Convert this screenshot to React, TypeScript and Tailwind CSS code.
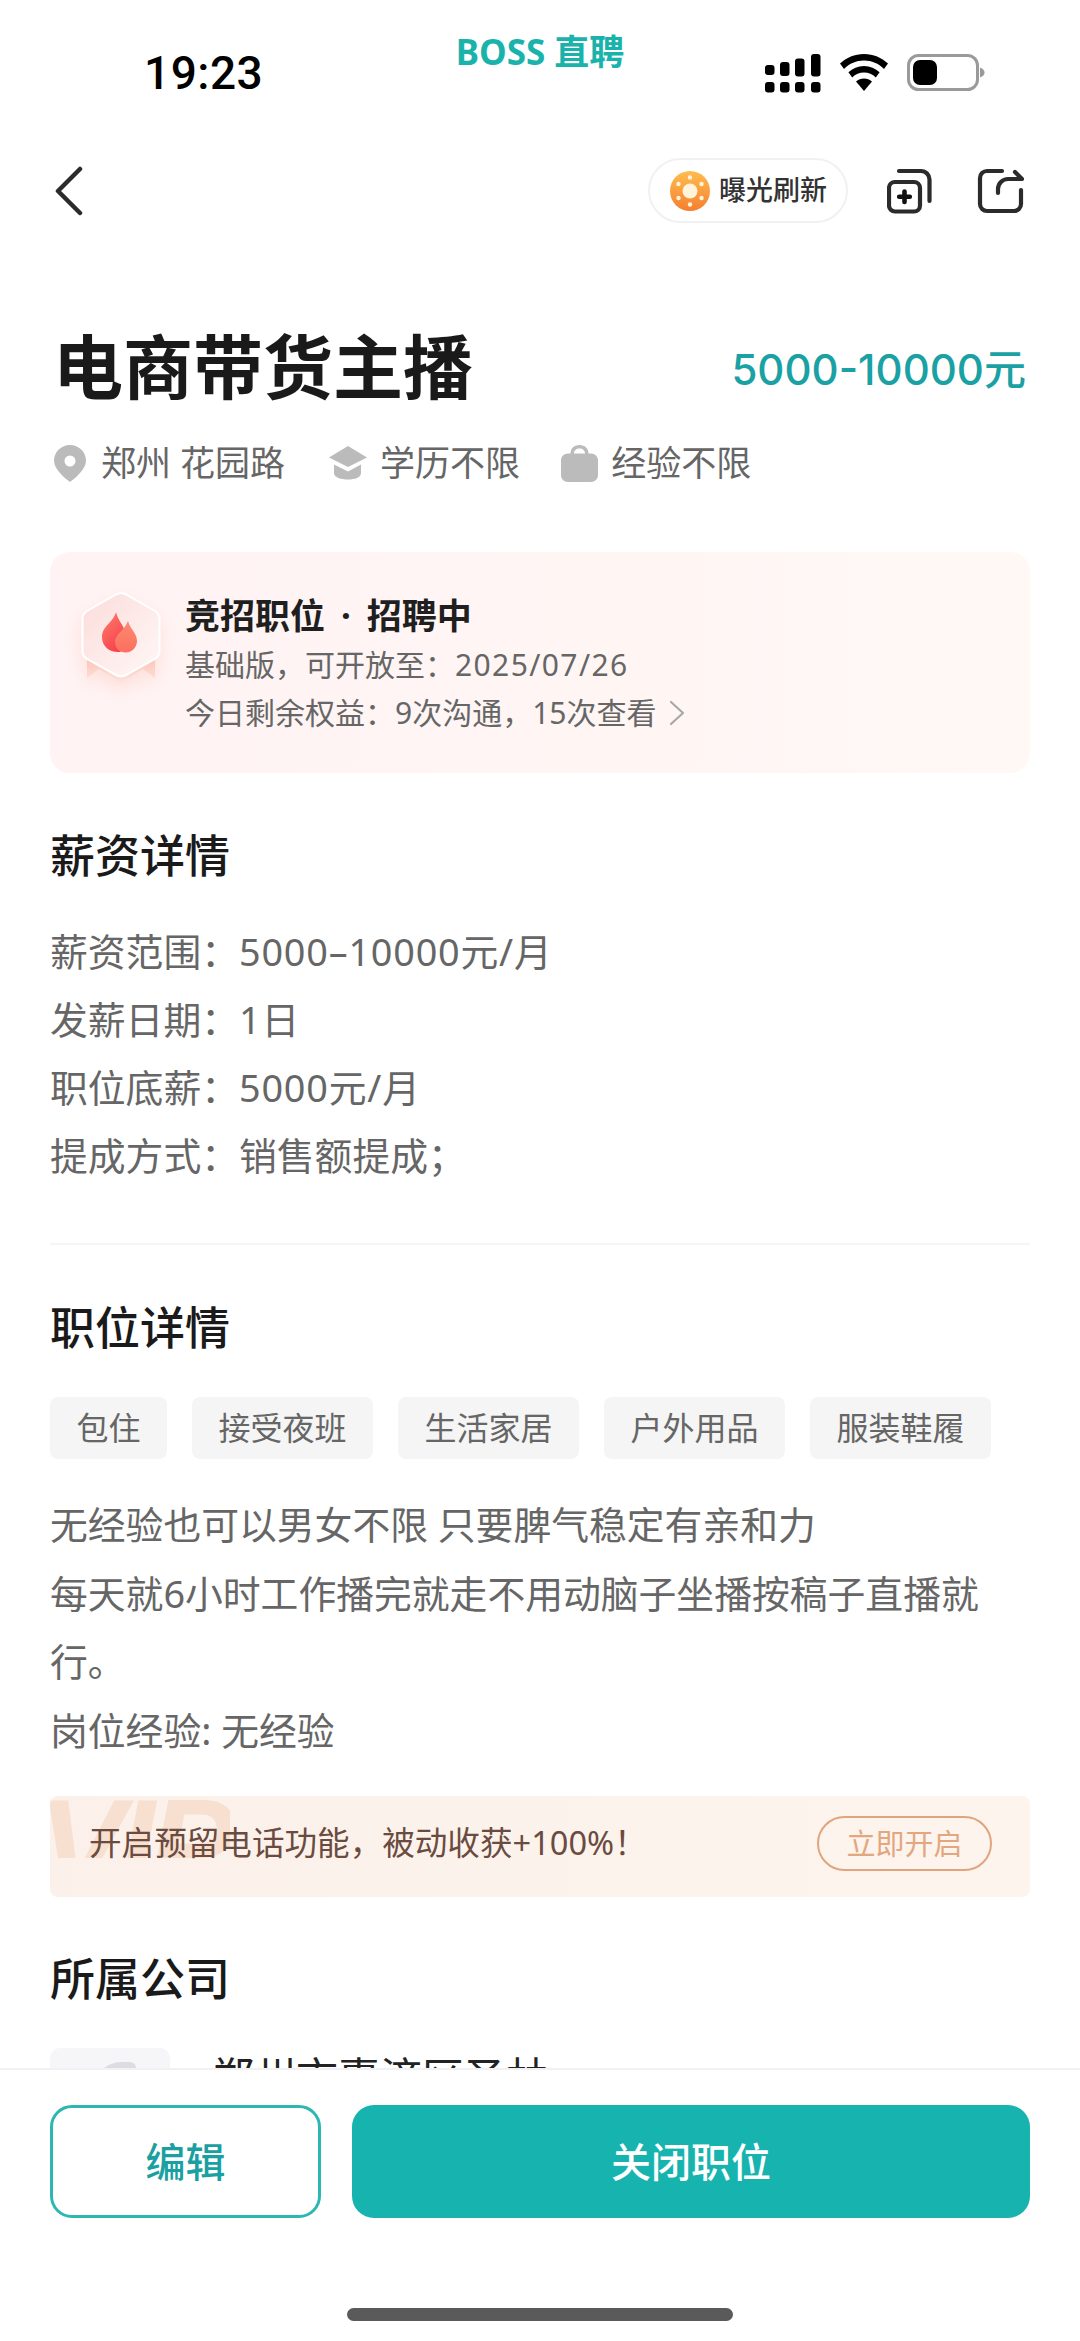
import React from 'react';

const cn = "font-['Noto_Sans','Noto_Sans_CJK_SC',sans-serif]";

const salaryRows = [
  { label: '薪资范围：', value: '5000–10000元/月', numeric: true },
  { label: '发薪日期：', value: '1日', numeric: true },
  { label: '职位底薪：', value: '5000元/月', numeric: true },
  { label: '提成方式：', value: '销售额提成；', numeric: false },
];

const tags = ['包住', '接受夜班', '生活家居', '户外用品', '服装鞋履'];

const SignalIcon = () => (
  <svg width="56" height="40" viewBox="0 0 56 40" fill="black">
    <rect x="0" y="11" width="9.5" height="10" rx="3" />
    <rect x="15" y="8" width="9.5" height="14" rx="3" />
    <rect x="30" y="4.5" width="9.5" height="18" rx="3" />
    <rect x="46" y="0" width="9.5" height="22.5" rx="3" />
    <rect x="0" y="28" width="9.5" height="10.5" rx="3" />
    <rect x="15" y="28" width="9.5" height="10.5" rx="3" />
    <rect x="30" y="28" width="9.5" height="10.5" rx="3" />
    <rect x="46" y="28" width="9.5" height="10.5" rx="3" />
  </svg>
);

const WifiIcon = () => (
  <svg width="48" height="37" viewBox="0 0 48 37" fill="black">
    <path d="M24 0C14.5 0 6.5 3.6 0 9.5L4 15C9.5 9.6 16.4 6.6 24 6.6S38.5 9.6 44 15L48 9.5C41.5 3.6 33.5 0 24 0Z" />
    <path d="M24 12C17.8 12 12.6 14.4 8.4 18.3L12.2 23.4C15.4 20.4 19.4 18.6 24 18.6S32.6 20.4 35.8 23.4L39.6 18.3C35.4 14.4 30.2 12 24 12Z" />
    <path d="M24 24.5C21 24.5 18.3 25.6 16 27.5L24 37L32 27.5C29.7 25.6 27 24.5 24 24.5Z" />
  </svg>
);

const BatteryIcon = () => (
  <svg width="78" height="37" viewBox="0 0 78 37">
    <rect x="1.5" y="1.5" width="69" height="34" rx="10" fill="none" stroke="#9a9a9a" strokeWidth="3" />
    <rect x="6" y="6" width="24" height="25" rx="7" fill="black" />
    <path d="M73 13.5C76 14.5 77.5 16.5 77.5 18.5S76 22.5 73 23.5Z" fill="#9a9a9a" />
  </svg>
);

const SunIcon = () => (
  <svg width="40" height="40" viewBox="0 0 40 40">
    <defs>
      <linearGradient id="sun" x1="0" y1="0" x2="0" y2="1">
        <stop offset="0" stopColor="#ffbd4f" />
        <stop offset="1" stopColor="#f57f31" />
      </linearGradient>
    </defs>
    <circle cx="20" cy="20" r="20" fill="url(#sun)" />
    <circle cx="20" cy="20" r="7.5" fill="#fff3d9" />
    <g fill="#fff3d9">
      <circle cx="20" cy="6.5" r="2.2" />
      <circle cx="20" cy="33.5" r="2.2" />
      <circle cx="8.5" cy="13" r="2.2" />
      <circle cx="31.5" cy="13" r="2.2" />
      <circle cx="8.5" cy="27" r="2.2" />
      <circle cx="31.5" cy="27" r="2.2" />
    </g>
  </svg>
);

const CopyPlusIcon = () => (
  <svg width="46" height="46" viewBox="0 0 46 46" fill="none" stroke="#2b2b2b" strokeWidth="4.2" strokeLinecap="round">
    <rect x="2" y="14" width="31" height="29.5" rx="6" />
    <path d="M12 3H34a8.5 8.5 0 0 1 8.5 8.5V33" />
    <path d="M17.5 23.5V34M12.2 28.7H22.8" stroke="#111" strokeWidth="4.6" />
  </svg>
);

const ShareIcon = () => (
  <svg width="47" height="46" viewBox="0 0 47 46" fill="none" stroke="#2b2b2b" strokeWidth="4.2" strokeLinecap="round" strokeLinejoin="round">
    <path d="M25 3H10a7 7 0 0 0-7 7V36a7 7 0 0 0 7 7H37a7 7 0 0 0 7-7V22" />
    <path d="M21 25V21a10 10 0 0 1 10-10H45L38 4" />
  </svg>
);

const PinIcon = () => (
  <svg width="32" height="37" viewBox="0 0 32 37">
    <path fillRule="evenodd" fill="#bbbbbb" d="M16 0C7.2 0 0 6.9 0 15.6C0 23.4 8.4 31.6 16 37C23.6 31.6 32 23.4 32 15.6C32 6.9 24.8 0 16 0ZM16 10.5a5.5 5.5 0 1 1 0 11a5.5 5.5 0 0 1 0-11Z" />
  </svg>
);

const CapIcon = () => (
  <svg width="40" height="34" viewBox="0 0 40 34" fill="#bbbbbb">
    <path d="M20 0L39 11.5L20 21L1 11.5Z" />
    <path d="M6 18.5L20 25.5L33 18.5V27C33 31.5 27 33.5 20 33.5S6 31.5 6 27Z" />
  </svg>
);

const BagIcon = () => (
  <svg width="37" height="37" viewBox="0 0 37 37" fill="#bbbbbb">
    <path fillRule="evenodd" d="M18.5 0C13 0 9.5 3.5 9.5 8.5H7C3 8.5 0 11.5 0 15.5V30C0 34 3 37 7 37H30C34 37 37 34 37 30V15.5C37 11.5 34 8.5 30 8.5H27.5C27.5 3.5 24 0 18.5 0ZM18.5 3.5C21.8 3.5 24 5.5 24 8.5H13C13 5.5 15.2 3.5 18.5 3.5Z" />
  </svg>
);

const FlameBadge = () => (
  <svg width="90" height="104" viewBox="0 0 90 104" className="shrink-0 drop-shadow-[0_8px_8px_rgba(250,150,130,0.2)]">
    <defs>
      <linearGradient id="hex" x1="0" y1="0" x2="1" y2="1">
        <stop offset="0" stopColor="#fbdcda" />
        <stop offset="1" stopColor="#fff8f7" />
      </linearGradient>
      <linearGradient id="flameA" x1="0" y1="0" x2="0.6" y2="1">
        <stop offset="0" stopColor="#fd7f6e" />
        <stop offset="1" stopColor="#f8414a" />
      </linearGradient>
      <linearGradient id="flameB" x1="0" y1="0" x2="0" y2="1">
        <stop offset="0" stopColor="#fd8a70" />
        <stop offset="1" stopColor="#fb6f5f" />
      </linearGradient>
      <linearGradient id="ribbon" x1="0" y1="0" x2="0" y2="1">
        <stop offset="0" stopColor="#fdbcae" />
        <stop offset="1" stopColor="#fde4de" />
      </linearGradient>
    </defs>
    <path d="M11 62H79V87L67 78L45 92L23 78L11 87Z" fill="url(#ribbon)" />
    <path d="M40 3.5Q45 1 50 3.5L79 20Q83.5 23 83.5 28V60Q83.5 65 79 68L50 84Q45 86.5 40 84L11 68Q6.5 65 6.5 60V28Q6.5 23 11 20Z" fill="url(#hex)" stroke="#ffffff" strokeWidth="2" />
    <path d="M40 21C42 31 50 35 50 47C50 52 47 55 44 58C46 60.5 45 61 42 61C33 61 26 55 26 46C26 35 37 32 40 21Z" fill="url(#flameA)" />
    <path d="M52 30C54 38 61 42 61 50C61 57 55 61.5 50 61.5C43 61.5 39 57 39 51C39 43 48 40 52 30Z" fill="url(#flameB)" />
  </svg>
);

const App = () => {
  return (
    <div className={`w-[1080px] h-[2341px] flex flex-col bg-white overflow-hidden ${cn}`}>
      {/* Status Bar */}
      <div className="h-[158px] shrink-0">
        <div className="grid grid-cols-[1fr_auto_1fr] items-start px-[95px]">
          <span className="ml-[49px] mt-[47px] text-[46px] leading-[53px] font-medium text-black font-['Roboto'] tracking-[0.5px]">19:23</span>
          <span className="mt-[28px] text-[35px] leading-[48px] font-bold text-[#1ab3ab]">BOSS 直聘</span>
          <div className="mt-[54px] flex items-start justify-end gap-[19px]">
            <SignalIcon />
            <WifiIcon />
            <BatteryIcon />
          </div>
        </div>
      </div>

      {/* Nav */}
      <div className="h-[65px] shrink-0 flex items-center justify-between pl-[55px] pr-[56px]">
        <svg width="28" height="50" viewBox="0 0 28 50" fill="none" stroke="#2b2b2b" strokeWidth="4.5" strokeLinecap="round" strokeLinejoin="round">
          <path d="M25 3L3 25L25 47" />
        </svg>
        <div className="flex items-center">
          <div className="h-[65px] w-[200px] flex items-center gap-[9px] pl-[20px] rounded-full border-2 border-[#f1f1f1]">
            <SunIcon />
            <span className="text-[27px] font-medium text-[#333333]">曝光刷新</span>
          </div>
          <div className="ml-[39px] mr-[44px]">
            <CopyPlusIcon />
          </div>
          <ShareIcon />
        </div>
      </div>

      {/* Scrolling content */}
      <div className="flex-1 min-h-0 overflow-hidden px-[50px]">
        <div className="mt-[104px] flex items-center justify-between pl-[3px] pr-[4px]">
          <h1 className="text-[70px] leading-[80px] font-bold text-[#1a1a1a]">电商带货主播</h1>
          <span className="pt-[6px] text-[42px] leading-[56px] font-medium text-[#1aa1a3] font-['Inter','Noto_Sans_CJK_SC',sans-serif]">5000-10000元</span>
        </div>

        <div className="mt-[32px] flex items-center pl-[4px] text-[35px] leading-[48px] text-[#666666]">
          <PinIcon />
          <span className="ml-[15px]">郑州 花园路</span>
          <span className="ml-[43px]"><CapIcon /></span>
          <span className="ml-[12px]">学历不限</span>
          <span className="ml-[41px]"><BagIcon /></span>
          <span className="ml-[13px]">经验不限</span>
        </div>

        {/* Plan Card */}
        <div className="mt-[65px] h-[221px] rounded-[20px] bg-gradient-to-r from-[#fff3f3] to-[#fff8f5] flex items-center pl-[26px]">
          <div className="-mt-[40px]">
            <FlameBadge />
          </div>
          <div className="ml-[19px] pt-[2px] flex flex-col">
            <div className="flex text-[35px] leading-[48px] font-bold text-[#1f1f1f]">
              <span>竞招职位</span>
              <span className="mx-[16px]">·</span>
              <span>招聘中</span>
            </div>
            <div className="mt-[2px] text-[30px] leading-[46px] text-[#666666]">
              基础版，可开放至：<span className="tracking-[1.4px]">2025/07/26</span>
            </div>
            <div className="mt-[2px] flex items-center text-[30px] leading-[46px] text-[#666666]">
              今日剩余权益：9次沟通，15次查看
              <svg width="16" height="26" viewBox="0 0 16 26" fill="none" stroke="#a8a8a8" strokeWidth="2.2" strokeLinecap="round" strokeLinejoin="round" className="ml-[13px]">
                <path d="M2 2L14 13L2 24" />
              </svg>
            </div>
          </div>
        </div>

        {/* Salary */}
        <h2 className="mt-[55px] text-[45px] leading-[56px] font-medium text-[#1a1a1a]">薪资详情</h2>
        <div className="mt-[34px] text-[37.8px] leading-[68px] text-[#666666]">
          {salaryRows.map(row => (
            <div key={row.label}>
              {row.label}
              <span className={row.numeric ? 'tracking-[0.8px]' : ''}>{row.value}</span>
            </div>
          ))}
        </div>
        <div className="mt-[53px] h-[2px] bg-[#f6f6f6]" />

        {/* Job detail */}
        <h2 className="mt-[55px] text-[45px] leading-[56px] font-medium text-[#1a1a1a]">职位详情</h2>
        <div className="mt-[41px] flex gap-[25px]">
          {tags.map(tag => (
            <span key={tag} className="h-[62px] px-[26.5px] flex items-center rounded-[8px] bg-[#f5f5f5] text-[32px] text-[#666666]">
              {tag}
            </span>
          ))}
        </div>
        <p className="mt-[32px] max-w-[950px] text-[37.8px] leading-[68.5px] text-[#666666]">
          无经验也可以男女不限 只要脾气稳定有亲和力
          <br />
          每天就6小时工作播完就走不用动脑子坐播按稿子直播就行。
          <br />
          岗位经验: 无经验
        </p>

        {/* Promo */}
        <div className="relative mt-[31px] h-[101px] rounded-[8px] bg-gradient-to-r from-[#fbf1ea] to-[#fdf4ee] flex items-center justify-between pl-[39px] pr-[38px] overflow-hidden">
          <div className="absolute left-0 top-0 w-[180px] h-[62px] overflow-hidden">
            <span className="absolute -left-[12px] -top-[16px] text-[130px] leading-[130px] font-bold italic tracking-[-6px] text-[#f7e0d0] font-['Liberation_Sans']">VIP</span>
          </div>
          <span className="relative -mt-[6px] text-[32.6px] text-[#6b4b40]">开启预留电话功能，被动收获+100%！</span>
          <span className="relative -mt-[6px] h-[55px] w-[175px] flex items-center justify-center rounded-full border-2 border-[#e0a57e] text-[29px] text-[#e3a77f]">立即开启</span>
        </div>

        {/* Company */}
        <h2 className="mt-[54px] text-[45px] leading-[56px] font-medium text-[#1a1a1a]">所属公司</h2>
        <div className="mt-[41px] flex items-start">
          <div className="relative w-[120px] h-[120px] rounded-[10px] bg-[#f6f6f8] overflow-hidden shrink-0">
            <div className="absolute left-[42px] top-[14px] w-[44px] h-[30px] rounded-tl-[40px] rounded-tr-[8px] bg-[#dcdce2]" />
          </div>
          <span className="ml-[42px] mt-[1px] text-[42px] leading-[56px] text-[#222222]">郑州市惠济区圣林</span>
        </div>
      </div>

      {/* Bottom actions */}
      <div className="h-[273px] shrink-0 bg-white border-t-2 border-[#f1f1f3] px-[50px] pt-[35px] flex flex-col">
        <div className="flex gap-[31px] h-[113px]">
          <button className="w-[271px] rounded-[22px] border-[3px] border-[#2db7b2] bg-white text-[40px] font-medium text-[#1a9fa2]">编辑</button>
          <button className="flex-1 rounded-[22px] bg-[#17b3af] text-[40px] font-medium text-white">关闭职位</button>
        </div>
        <div className="mt-[90px] ml-[297px] w-[386px] h-[13px] rounded-full bg-[#5a5a5a]" />
      </div>
    </div>
  );
};

export default App;
